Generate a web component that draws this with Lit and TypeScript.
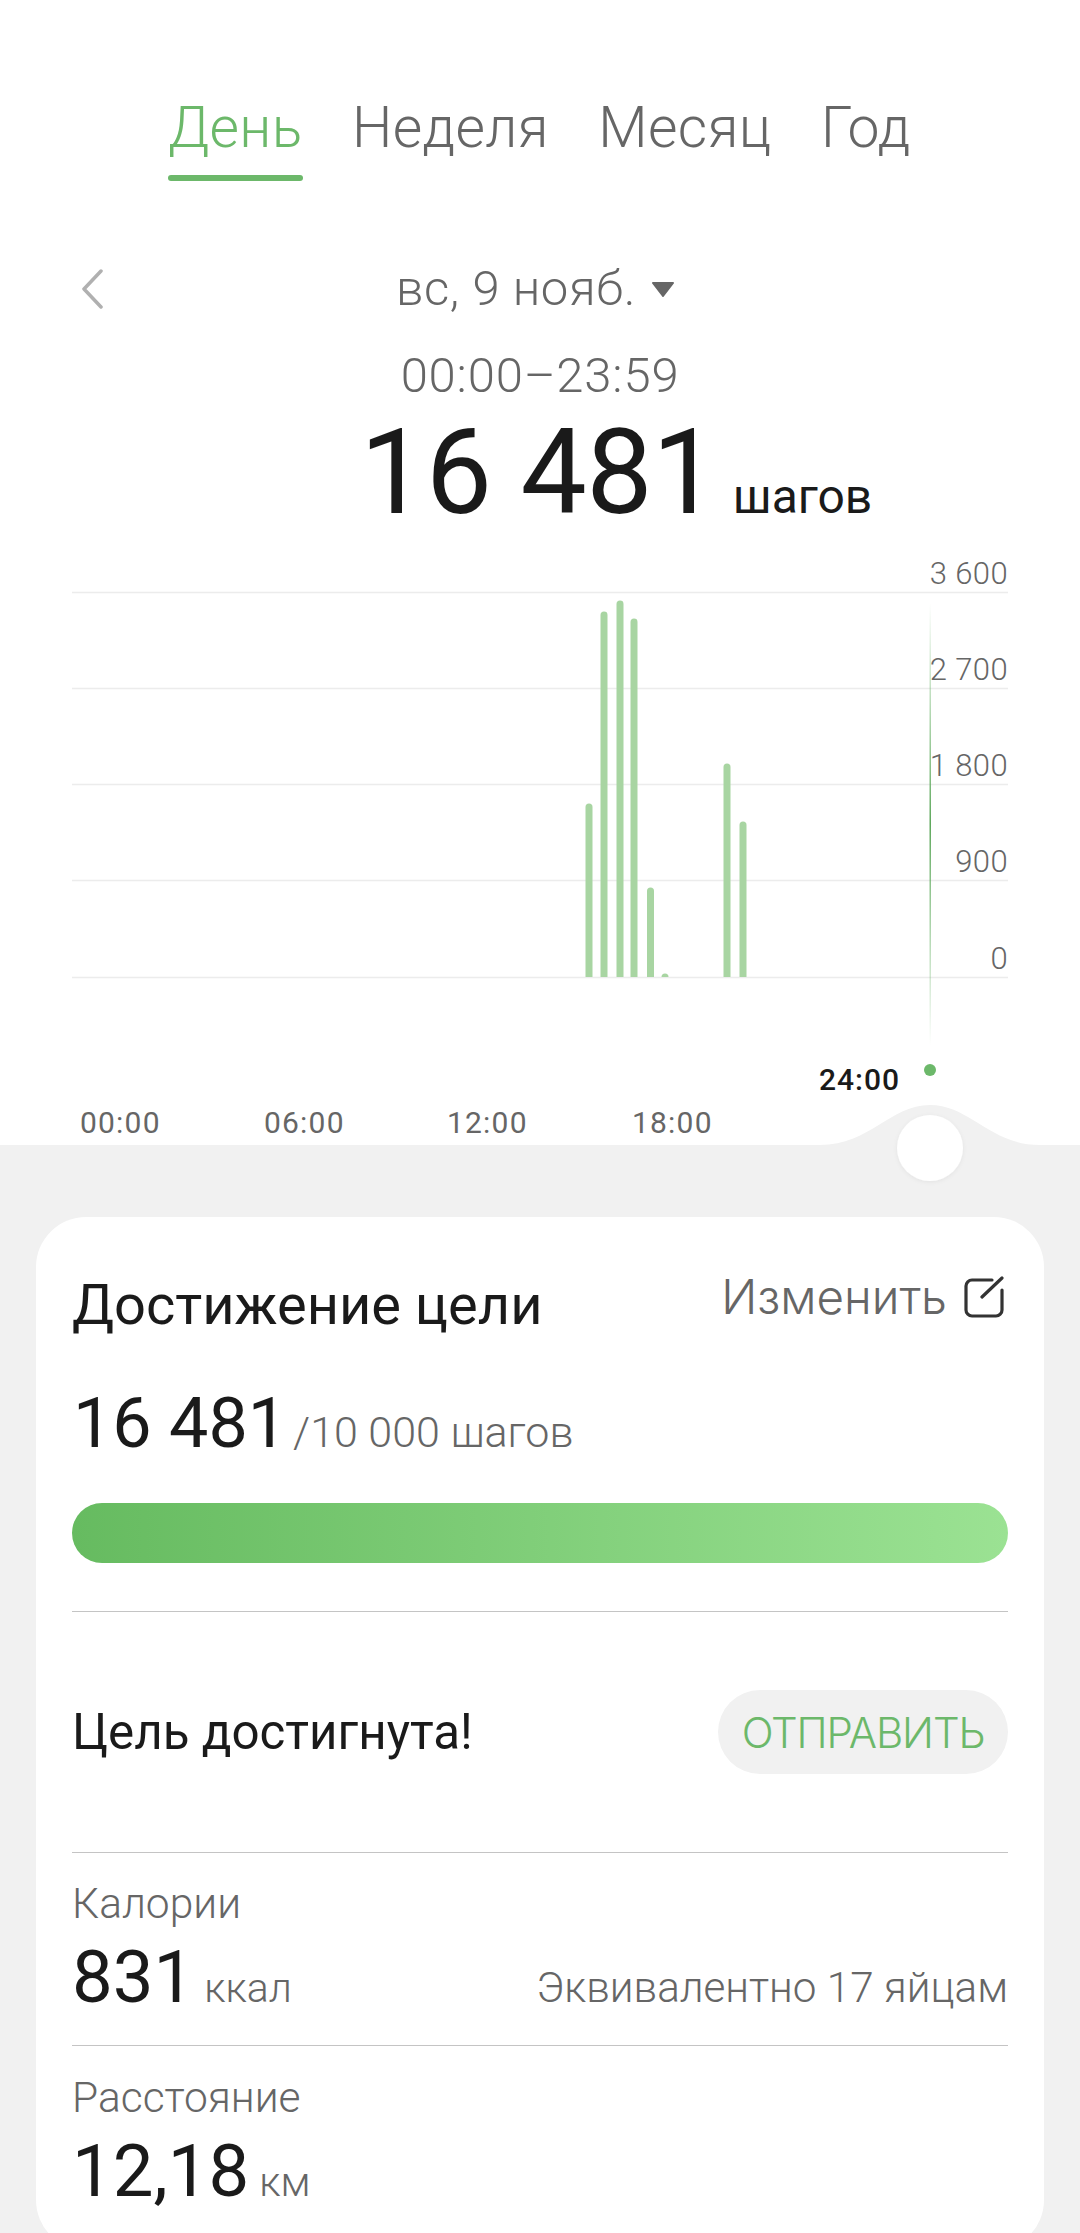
import { LitElement, html, css, svg } from "lit";
import { customElement } from "lit/decorators.js";

const GRID = [592, 688, 784, 880, 977];
const Y_LABELS = ["3 600", "2 700", "1 800", "900", "0"];
const BARS: [number, number][] = [
  [589, 804], [604, 612], [620, 601], [634, 619], [650.5, 888], [665, 974], [727, 764], [743, 822],
];
const X_LABELS: [number, string][] = [[80, "00:00"], [264, "06:00"], [447, "12:00"], [632, "18:00"]];

@customElement("app-root")
export class AppRoot extends LitElement {
  static styles = css`
    :host { display: block; width: 1080px; height: 2233px; overflow: hidden; background: #f1f1f1;
      font-family: Roboto, "Liberation Sans", sans-serif; font-weight: 300; color: #1a1a1a; }
    .top { background: #fff; padding-top: 98px; height: 550px; box-sizing: border-box; }
    .tabs { display: flex; gap: 49.5px; padding-left: 168px; font-size: 57px; letter-spacing: 0.3px; line-height: 60px; color: #666; }
    .tab.on { color: #6cb86a; }
    .bar { height: 6px; margin-top: 17px; border-radius: 3px; background: #6cb86a; }
    .daterow { display: grid; grid-template-columns: 1fr auto 1fr; margin-top: 80px; align-items: center; font-size: 49px; letter-spacing: 0.6px; line-height: 56px; color: #666; }
    .chev { margin-left: 81px; display: block; }
    .date { display: flex; align-items: center; gap: 15px; margin-right: 9px; }
    .time { margin-top: 31px; text-align: center; font-size: 49px; letter-spacing: 0.8px; line-height: 56px; color: #666; }
    .big { display: flex; align-items: baseline; gap: 15px; margin-top: 9px; padding-left: 360px; }
    .big b { font-weight: 400; font-size: 118px; letter-spacing: -0.5px; line-height: 120px; }
    .big span { font-size: 48px; line-height: 50px; font-weight: 400; }
    svg.chart { display: block; }
    .ylab { font: 300 31px Roboto, sans-serif; fill: #666; text-anchor: end; letter-spacing: 0.4px; }
    .xlab { font: 400 30px Roboto, sans-serif; fill: #666; letter-spacing: 1.2px; }
    .now { font: 500 30px Roboto, sans-serif; fill: #1a1a1a; letter-spacing: 1px; }
    .card { margin: 0 36px; background: #fff; border-radius: 50px; padding: 58px 36px 40px; height: 1033px; box-sizing: border-box; }
    .head { display: flex; justify-content: space-between; align-items: flex-start; }
    .title { font-size: 56px; line-height: 60px; font-weight: 400; }
    .edit { display: flex; align-items: center; gap: 16px; margin-right: 3px; color: #666; font-family: Inter, sans-serif; font-size: 47.5px; line-height: 56px; margin-top: -6px; }
    .goal { display: flex; align-items: baseline; margin-top: 50px; padding-left: 1px; gap: 6px; }
    .goal b { font-weight: 400; font-size: 70px; line-height: 76px; }
    .goal span { font-size: 43px; color: #666; }
    .progress { height: 60px; margin-top: 42px; border-radius: 30px; background: linear-gradient(90deg, #66bb60, #9be293); }
    .reached { display: flex; justify-content: space-between; align-items: center; height: 240px; margin-top: 48px; border-top: 1px solid #c4c4c4; border-bottom: 1px solid #c4c4c4; box-sizing: content-box; font-size: 49.3px; font-weight: 400; }
    .send { height: 84px; width: 290px; border-radius: 42px; background: #f1f1f1; color: #6cb86a; font-size: 42px; letter-spacing: -1.1px; display: flex; align-items: center; justify-content: center; font-family: Inter, sans-serif; font-weight: 300; }
    .stat { padding: 27px 0; }
    .stat + .stat { border-top: 1px solid #c4c4c4; padding-top: 28px; }
    .label { font-size: 42.5px; line-height: 48px; color: #666; }
    .vals { display: flex; align-items: baseline; justify-content: space-between; margin-top: 10px; }
    .val b { font-weight: 400; font-size: 72.5px; line-height: 80px; }
    .val span { font-size: 41px; color: #666; margin-left: 10px; }
    .eq { font-size: 42.2px; color: #666; }
  `;

  renderChart() {
    return html`<svg class="chart" width="1080" height="667" viewBox="0 550 1080 667">
      <defs>
        <linearGradient id="ind" x1="0" y1="0" x2="0" y2="1">
          <stop offset="0" stop-color="#6cb86a" stop-opacity="0" />
          <stop offset="0.5" stop-color="#5fa85d" />
          <stop offset="1" stop-color="#6cb86a" stop-opacity="0" />
        </linearGradient>
        <filter id="sh" x="-30%" y="-30%" width="160%" height="160%">
          <feDropShadow dx="0" dy="1" stdDeviation="2" flood-color="#000" flood-opacity="0.06" />
        </filter>
      </defs>
      <rect x="0" y="550" width="1080" height="595" fill="#fff" />
      <path d="M820 1145 C870 1145 890 1105 930 1105 C970 1105 990 1145 1040 1145 Z" fill="#f1f1f1" />
      ${GRID.map((y) => svg`<line x1="72" x2="1008" y1=${y + 0.5} y2=${y + 0.5} stroke="#ececec" stroke-width="1.5" />`)}
      ${GRID.map((y, i) => svg`<text class="ylab" x="1008" y=${y - 8}>${Y_LABELS[i]}</text>`)}
      ${BARS.map(([x, t]) => svg`<path d="M${x - 3.5} 977 V${t + 3} a3.5 3.5 0 0 1 7 0 V977 Z" fill="#a8d5a2" />`)}
      <rect x="929.5" y="603" width="1.5" height="442" fill="url(#ind)" />
      <circle cx="930" cy="1070" r="6" fill="#6cb86a" />
      <text class="now" x="819" y="1090">24:00</text>
      ${X_LABELS.map(([x, t]) => svg`<text class="xlab" x=${x} y="1133">${t}</text>`)}
      <circle cx="930" cy="1148" r="33" fill="#fff" filter="url(#sh)" />
    </svg>`;
  }

  render() {
    return html`
      <div class="top">
        <div class="tabs">
          <div class="tab on">День<div class="bar"></div></div>
          <div class="tab">Неделя</div>
          <div class="tab">Месяц</div>
          <div class="tab">Год</div>
        </div>
        <div class="daterow">
          <svg class="chev" width="22" height="40" viewBox="0 0 22 40"><path d="M20 2 L3 20 L20 38" fill="none" stroke="#b0b0b0" stroke-width="3.5" stroke-linecap="round" stroke-linejoin="round" /></svg>
          <div class="date">вс, 9 нояб.
            <svg width="24" height="16" viewBox="0 0 24 16"><path d="M2 2 H22 L12 15 Z" fill="#666" stroke="#666" stroke-width="2" stroke-linejoin="round" /></svg>
          </div>
          <div></div>
        </div>
        <div class="time">00:00–23:59</div>
        <div class="big"><b>16 481</b><span>шагов</span></div>
      </div>
      ${this.renderChart()}
      <div class="card">
        <div class="head">
          <div class="title">Достижение цели</div>
          <div class="edit">Изменить
            <svg width="42" height="42" viewBox="0 0 42 42"><path d="M29 4 H9 a6 6 0 0 0 -6 6 V34 a6 6 0 0 0 6 6 H33 a6 6 0 0 0 6 -6 V14" fill="none" stroke="#333" stroke-width="3.2" stroke-linecap="round" /><path d="M19 21 L39 2" fill="none" stroke="#333" stroke-width="3.2" stroke-linecap="round" /></svg>
          </div>
        </div>
        <div class="goal"><b>16 481</b><span>/10 000 шагов</span></div>
        <div class="progress"></div>
        <div class="reached"><div>Цель достигнута!</div><div class="send">ОТПРАВИТЬ</div></div>
        <div class="stat">
          <div class="label">Калории</div>
          <div class="vals"><div class="val"><b>831</b><span>ккал</span></div><div class="eq">Эквивалентно 17 яйцам</div></div>
        </div>
        <div class="stat">
          <div class="label">Расстояние</div>
          <div class="vals"><div class="val"><b>12,18</b><span>км</span></div></div>
        </div>
      </div>
    `;
  }
}
